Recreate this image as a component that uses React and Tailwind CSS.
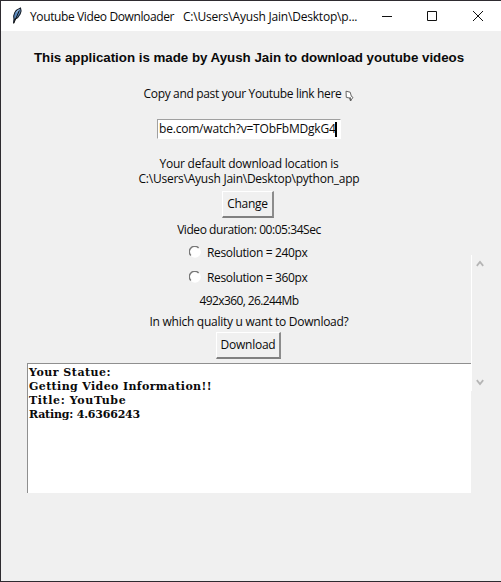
import React from "react";

const UI = "font-['Open_Sans','Noto_Sans',sans-serif]";

function Label({ className = "", children }) {
  return (
    <div className={`flex h-[15px] justify-center whitespace-nowrap leading-[15px] ${className}`}>
      <span>{children}</span>
    </div>
  );
}

function Button({ className = "", children }) {
  return (
    <button
      className={`flex h-[27px] shrink-0 items-center justify-center whitespace-nowrap border-t border-l border-r-2 border-b-2 border-t-white border-l-white border-r-[#8c8c8c] border-b-[#808080] bg-[#f0f0f0] tracking-[-0.25px] ${className}`}
    >
      {children}
    </button>
  );
}

function Radio({ className = "", children }) {
  return (
    <label className={`ml-[162px] flex h-[15px] items-center whitespace-nowrap leading-[15px] tracking-[-0.34px] ${className}`}>
      <svg width="12" height="12" viewBox="0 0 12 12" className="mr-[6px] -mt-[1px] shrink-0">
        <circle cx="6" cy="6" r="5.8" fill="#fff" />
        <path d="M1.9 9.6A5.2 5.2 0 0 1 9.6 1.9" fill="none" stroke="#777" strokeWidth="1.4" />
      </svg>
      <span>{children}</span>
    </label>
  );
}

export default function App() {
  return (
    <div className={`flex h-[582px] w-[501px] flex-col overflow-hidden border-t border-b border-l border-[#2e2b30] bg-[#f0f0f0] text-[12px] text-[#0a0a0a] ${UI}`}>
      <header className="flex h-[30px] shrink-0 items-center bg-white">
        <svg width="12" height="18" viewBox="0 0 12 18" className="ml-[10px] shrink-0">
          <path d="M2.5 16 3 12C1.8 8 4 3 9.5 1 11 4 9 10 3.6 12.5Z" fill="#5c8bc0" stroke="#18202b" strokeWidth="1.1" />
          <path d="M2.7 16.5 8.3 3.5" stroke="#111" strokeWidth="1" />
          <path d="M5 5.5 8 2.5" stroke="#b8d4ef" strokeWidth="1" />
        </svg>
        <div className="ml-[7px] flex w-[340px] whitespace-pre leading-[15px]">
          <span className="w-[153px] tracking-[-0.38px]">Youtube Video Downloader</span>
          <span className="tracking-[-0.2px]">C:\Users\Ayush Jain\Desktop\p...</span>
        </div>
        <svg width="104" height="12" viewBox="0 0 104 12" className="ml-[11px] shrink-0" fill="none" stroke="#111" strokeWidth="1">
          <path d="M1 6.5h10" />
          <path d="M46.5 1.5h9v9h-9z" />
          <path d="m92 1 10 10m0-10-10 10" />
        </svg>
      </header>

      <main className="ml-[26px] flex">
        <section className="flex w-[444px] shrink-0 flex-col">
          <h1 className="mt-[18px] flex h-[18px] items-center justify-center whitespace-nowrap font-['Liberation_Sans',Arial,sans-serif] text-[13.33px] font-bold tracking-[-0.02px]">
            <span>This application is made by Ayush Jain to download youtube videos</span>
          </h1>
          <div className="mt-[19px] flex h-[15px] items-center justify-center whitespace-nowrap leading-[15px] tracking-[-0.34px]">
            <span>Copy and past your Youtube link here</span>
            <svg width="9" height="12" viewBox="0 0 9 12" className="ml-[4px] mt-[4px] shrink-0" fill="#fff" stroke="#555" strokeWidth=".9">
              <path d="M1 1.2 5.2 2.2 6.4 6.4 8 7.4 5.4 10.8 4.6 8 1.3 7.4Z" />
              <path d="m5 7 1 4" />
            </svg>
          </div>
          <div className="ml-[130px] mt-[18px] flex h-[20px] w-[184px] items-center overflow-hidden whitespace-nowrap border border-t-[#a0a0a0] border-l-[#a0a0a0] border-r-white border-b-white bg-white pl-[1px] tracking-[-0.2px]">
            <span>be.com/watch?v=TObFbMDgkG4</span>
            <i className="-ml-px h-[15px] w-[2px] shrink-0 bg-black" />
          </div>
          <p className="mt-[17px] h-[30px] whitespace-nowrap text-center leading-[15px] tracking-[-0.24px]">
            Your default download location is
            <br />
            C:\Users\Ayush Jain\Desktop\python_app
          </p>
          <Button className="ml-[195px] mt-[5px] w-[52px]">Change</Button>
          <Label className="mt-[4px] tracking-[-0.44px]">Video duration: 00:05:34Sec</Label>
          <Radio className="mt-[8px]">Resolution = 240px</Radio>
          <Radio className="mt-[10px]">Resolution = 360px</Radio>
          <Label className="mt-[8px] tracking-[-0.6px]">492x360, 26.244Mb</Label>
          <Label className="mt-[6px] tracking-[-0.26px]">In which quality u want to Download?</Label>
          <Button className="ml-[189px] mt-[3px] w-[65px]">Download</Button>
          <div className="mt-[4px] h-[130px] whitespace-pre border-t border-l border-[#8f8f8f] bg-white pl-[1px] pt-[2px] font-['DejaVu_Serif',serif] text-[11px] font-bold leading-[14px]">
            <p className="tracking-[0.5px]">Your Statue:</p>
            <p className="tracking-[0.38px]">Getting Video Information!!</p>
            <p className="tracking-[0.62px]">Title: YouTube</p>
            <p className="tracking-[-0.2px]">Rating: 4.6366243</p>
          </div>
        </section>
        <aside className="mt-[224px] flex h-[136px] w-[16px] shrink-0 flex-col items-center justify-between border-l border-white bg-[#f0f0f0] pb-[5px] pt-[5px]">
          <svg width="8" height="8" viewBox="0 0 8 8" fill="none" stroke="#b5b5b5" strokeWidth="1.8"><path d="m.8 5.8 3.2-3.8 3.2 3.8" /></svg>
          <svg width="8" height="8" viewBox="0 0 8 8" fill="none" stroke="#b5b5b5" strokeWidth="1.8"><path d="m.8 2.2 3.2 3.8 3.2-3.8" /></svg>
        </aside>
      </main>
    </div>
  );
}
